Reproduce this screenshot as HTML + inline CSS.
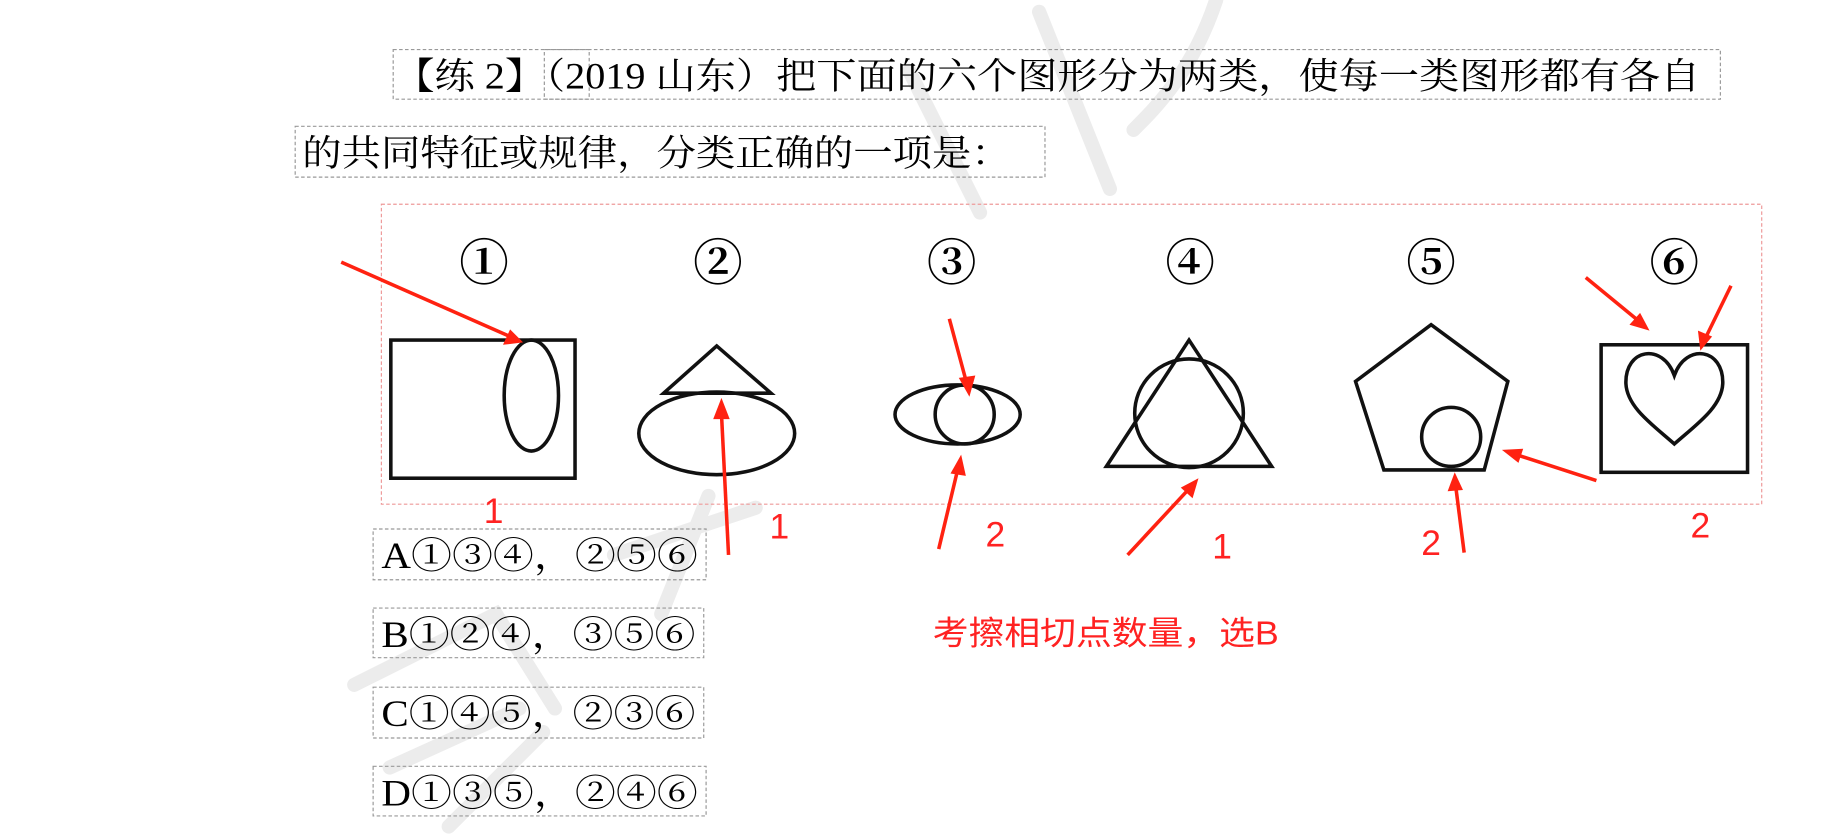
<!DOCTYPE html>
<html><head><meta charset="utf-8"><style>
html,body{margin:0;padding:0;background:#fff;}
svg{display:block}
.t{font-family:"Liberation Serif","Noto Serif CJK SC",serif;font-size:31px;fill:#000}
.r{font-family:"Liberation Sans","Noto Sans CJK SC",sans-serif;fill:#f22}
.s{fill:none;stroke:#111;stroke-width:3}
.db{fill:none;stroke:#999;stroke-width:1;stroke-dasharray:3 2}
.a{stroke:#f21;stroke-width:3;fill:none}
.h{fill:#f21}
</style></head><body>
<svg width="1842" height="840" viewBox="0 0 1560 711.4" preserveAspectRatio="none">
<g fill="none" stroke="#ececec" stroke-width="12" stroke-linecap="round">
<path d="M1030 0 C1010 60 980 90 960 110"/>
<path d="M880 10 L940 160"/>
<path d="M770 60 L830 180"/>
<path d="M600 420 L560 520 M520 470 L640 430"/>
<path d="M300 580 L420 520 L470 600 M330 650 L440 600"/>
<path d="M380 700 L460 620"/>
</g>
<rect class="db" x="333" y="42" width="1124" height="42"/>
<rect class="db" x="461" y="42" width="38" height="42"/>
<text class="t" x="334" y="75" textLength="1106" lengthAdjust="spacingAndGlyphs">【练 2】（2019 山东）把下面的六个图形分为两类，使每一类图形都有各自</text>
<rect class="db" x="250" y="107" width="635" height="43"/>
<text class="t" x="256" y="140" textLength="600" lengthAdjust="spacingAndGlyphs">的共同特征或规律，分类正确的一项是：</text>
<rect x="323" y="173" width="1169" height="254" fill="none" stroke="#e99" stroke-width="1" stroke-dasharray="3 2"/>
<g class="t" style="font-size:42px;font-weight:bold" text-anchor="middle">
<text x="410" y="237">①</text><text x="608" y="237">②</text><text x="806" y="237">③</text>
<text x="1008" y="237">④</text><text x="1212" y="237">⑤</text><text x="1418" y="237">⑥</text>
</g>
<rect class="s" x="331" y="288" width="156" height="117"/>
<ellipse class="s" cx="450" cy="335" rx="23" ry="47"/>
<polygon class="s" points="607,293 562,333 653,333"/>
<ellipse class="s" cx="607" cy="367" rx="66" ry="35"/>
<ellipse class="s" cx="811" cy="351" rx="53" ry="25"/>
<circle class="s" cx="817" cy="351" r="25"/>
<polygon class="s" points="1007,288 937,395 1077,395"/>
<circle class="s" cx="1007" cy="350" r="46"/>
<polygon class="s" points="1212,275 1277,323 1257,398 1172,398 1148,323"/>
<circle class="s" cx="1229" cy="370" r="25"/>
<rect class="s" x="1356" y="292" width="124" height="108"/>
<path class="s" d="M1418 318 C1408 290 1376 295 1377 325 C1378 345 1400 360 1418 376 C1436 360 1458 345 1459 325 C1460 295 1428 290 1418 318 Z"/>
<g>
<line class="a" x1="289" y1="222" x2="432" y2="285"/><polygon class="h" points="443,290 426,292 432,279"/>
<line class="a" x1="617" y1="470" x2="611" y2="350"/><polygon class="h" points="611,337 604,355 618,355"/>
<line class="a" x1="804" y1="270" x2="818" y2="322"/><polygon class="h" points="821,336 812,320 826,318"/>
<line class="a" x1="795" y1="465" x2="811" y2="398"/><polygon class="h" points="814,385 805,401 818,403"/>
<line class="a" x1="955" y1="470" x2="1007" y2="414"/><polygon class="h" points="1015,405 1010,422 1000,413"/>
<line class="a" x1="1240" y1="468" x2="1233" y2="413"/><polygon class="h" points="1232,400 1226,416 1239,415"/>
<line class="a" x1="1352" y1="407" x2="1284" y2="385"/><polygon class="h" points="1272,381 1290,380 1286,392"/>
<line class="a" x1="1343" y1="235" x2="1388" y2="272"/><polygon class="h" points="1397,280 1380,275 1389,265"/>
<line class="a" x1="1466" y1="242" x2="1445" y2="285"/><polygon class="h" points="1440,297 1438,280 1450,285"/>
</g>
<g class="r" style="font-size:30px" text-anchor="middle">
<text x="418" y="443">1</text><text x="660" y="456">1</text><text x="843" y="463">2</text>
<text x="1035" y="473">1</text><text x="1212" y="470">2</text><text x="1440" y="455">2</text>
</g>
<text class="r" x="790" y="546" style="font-size:28px" textLength="293" lengthAdjust="spacingAndGlyphs">考擦相切点数量，选B</text>
<g class="t">
<rect class="db" x="316" y="448" width="282" height="43"/><text x="323" y="481" textLength="268" lengthAdjust="spacingAndGlyphs">A①③④，②⑤⑥</text>
<rect class="db" x="316" y="515" width="280" height="42"/><text x="323" y="548" textLength="266" lengthAdjust="spacingAndGlyphs">B①②④，③⑤⑥</text>
<rect class="db" x="316" y="582" width="280" height="43"/><text x="323" y="615" textLength="266" lengthAdjust="spacingAndGlyphs">C①④⑤，②③⑥</text>
<rect class="db" x="316" y="649" width="282" height="42"/><text x="323" y="682" textLength="268" lengthAdjust="spacingAndGlyphs">D①③⑤，②④⑥</text>
</g>
</svg>
</body></html>
